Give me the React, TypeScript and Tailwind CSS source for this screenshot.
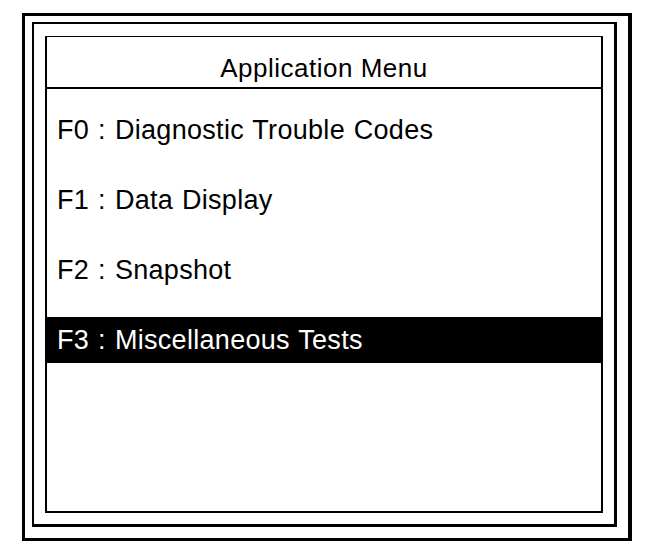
import React from 'react';

const items = [
  { key: 'F0', label: 'Diagnostic Trouble Codes' },
  { key: 'F1', label: 'Data Display' },
  { key: 'F2', label: 'Snapshot' },
  { key: 'F3', label: 'Miscellaneous Tests' },
];

// Scan tool screen - application menu with the last entry selected
export default function App() {
  const selected = 3;

  return (
    <div className="w-[672px] h-[556px] bg-white pt-[13px] pl-[22px] font-['Liberation_Sans',Arial,sans-serif] text-black">
      <div className="flex w-[610px] h-[528px] border-[3px] border-r-4 border-black pl-[7px] pt-[6px] pr-[11px] pb-[11px]">
        <div className="flex flex-1 border-l-2 border-t-2 border-r-[3px] border-b-[3px] border-black pl-[11px] pt-[12px] pr-[11px] pb-[11px]">
          <div className="flex flex-1 flex-col border-t border-l-2 border-r-2 border-b-2 border-black">
            <div className="flex h-[52px] items-center justify-center pt-[11px] border-b-2 border-black">
              <span className="text-[26px] leading-none tracking-[0.5px]">Application Menu</span>
            </div>
            <div className="flex flex-col gap-6 pt-[18px]">
              {items.map((item, i) => (
                <div
                  key={item.key}
                  className={
                    i === selected
                      ? 'flex h-[46px] items-center pl-[10px] bg-black text-white'
                      : 'flex h-[46px] items-center pl-[10px]'
                  }
                >
                  <span className="text-[27px] leading-none tracking-[0.3px] [word-spacing:1px]">
                    {item.key}
                    <span className="mx-[9px]">:</span>
                    {item.label}
                  </span>
                </div>
              ))}
            </div>
          </div>
        </div>
      </div>
    </div>
  );
}
